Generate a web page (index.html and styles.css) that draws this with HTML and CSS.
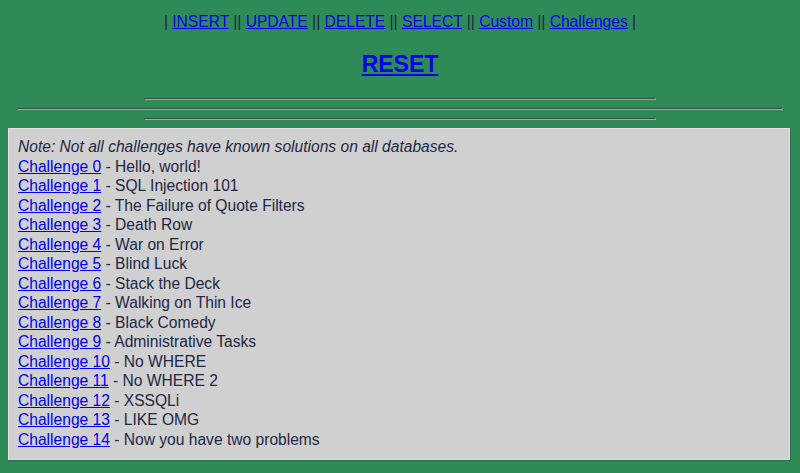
FILE: index.html
```html
<!DOCTYPE html>
<html>
<head>
<meta charset="utf-8">
<title>SQLol Challenges</title>
<link rel="stylesheet" href="styles.css">
</head>
<body>
<div class="page">
  <div class="nav">| <a href="#">INSERT</a> || <a href="#">UPDATE</a> || <a href="#">DELETE</a> || <a href="#">SELECT</a> || <a href="#">Custom</a> || <a href="#">Challenges</a> |</div>
  <div class="reset"><a href="#">RESET</a></div>
  <hr class="rule-short">
  <hr class="rule-long">
  <hr class="rule-short">
  <div class="box">
    <div class="note">Note: Not all challenges have known solutions on all databases.</div>
    <div class="row"><a href="#">Challenge 0</a> - Hello, world!</div>
    <div class="row"><a href="#">Challenge 1</a> - SQL Injection 101</div>
    <div class="row"><a href="#">Challenge 2</a> - The Failure of Quote Filters</div>
    <div class="row"><a href="#">Challenge 3</a> - Death Row</div>
    <div class="row"><a href="#">Challenge 4</a> - War on Error</div>
    <div class="row"><a href="#">Challenge 5</a> - Blind Luck</div>
    <div class="row"><a href="#">Challenge 6</a> - Stack the Deck</div>
    <div class="row"><a href="#">Challenge 7</a> - Walking on Thin Ice</div>
    <div class="row"><a href="#">Challenge 8</a> - Black Comedy</div>
    <div class="row"><a href="#">Challenge 9</a> - Administrative Tasks</div>
    <div class="row"><a href="#">Challenge 10</a> - No WHERE</div>
    <div class="row"><a href="#">Challenge 11</a> - No WHERE 2</div>
    <div class="row"><a href="#">Challenge 12</a> - XSSQLi</div>
    <div class="row"><a href="#">Challenge 13</a> - LIKE OMG</div>
    <div class="row"><a href="#">Challenge 14</a> - Now you have two problems</div>
  </div>
</div>
</body>
</html>
```
FILE: styles.css
```css
html, body {
  margin: 0;
  padding: 0;
  background: #2e8b57;
}
body {
  font-family: "Liberation Sans", Arial, sans-serif;
  font-size: 15.6px;
  color: #1e2744;
}
a {
  color: #0000ee;
}
.page {
  padding: 12px 8px 8px;
}
.nav {
  text-align: center;
  line-height: 19px;
}
.reset {
  margin-top: 19px;
  text-align: center;
  font-size: 23px;
  font-weight: bold;
  line-height: 28px;
}
.page hr {
  height: 0;
  margin: 8px auto;
  border-top: 1px solid #3d4a44;
  border-left: 1px solid #3d4a44;
  border-bottom: 1px solid #a7aaa8;
  border-right: 1px solid #a7aaa8;
}
.rule-short {
  width: 65%;
}
.reset + .rule-short {
  margin-top: 20px !important;
}
.rule-long {
  width: 97.5%;
}
.box {
  margin: 7px 2px 0 0;
  background: #d0d0d0;
  border: 1px solid #e2e2e2;
  box-shadow: 1px 1px 0 #276e47;
  padding: 8px 9px 10px;
  line-height: 19.5px;
}
.note {
  font-style: italic;
}
```
